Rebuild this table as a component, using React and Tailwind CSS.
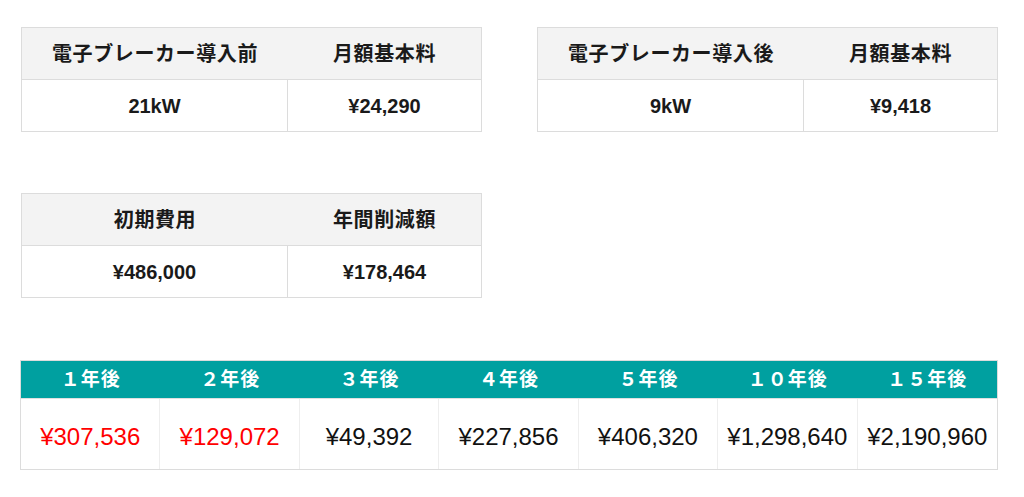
import React from "react";

const font = { fontFamily: '"Liberation Sans", "Noto Sans CJK JP", sans-serif' };

function InfoTable({ h1, h2, v1, v2 }) {
  return (
    <div className="w-[461px] border border-[#dcdcdc] text-[20px] font-bold text-[#1a1a1a]">
      <div className="grid grid-cols-[266px_1fr] h-[52px] bg-[#f3f3f3] border-b border-[#dcdcdc] tracking-[0.6px]">
        <div className="flex items-center justify-center">{h1}</div>
        <div className="flex items-center justify-center">{h2}</div>
      </div>
      <div className="grid grid-cols-[266px_1fr] h-[51px] bg-white">
        <div className="flex items-center justify-center border-r border-[#dcdcdc]">{v1}</div>
        <div className="flex items-center justify-center">{v2}</div>
      </div>
    </div>
  );
}

const years = [
  { y: "１年後", v: "¥307,536", red: true },
  { y: "２年後", v: "¥129,072", red: true },
  { y: "３年後", v: "¥49,392" },
  { y: "４年後", v: "¥227,856" },
  { y: "５年後", v: "¥406,320" },
  { y: "１０年後", v: "¥1,298,640" },
  { y: "１５年後", v: "¥2,190,960" },
];

export default function App() {
  return (
    <div className="w-[1024px] h-[497px] bg-white pt-[27px]" style={font}>
      <div className="flex pl-[21px] gap-[55px]">
        <InfoTable h1="電子ブレーカー導入前" h2="月額基本料" v1="21kW" v2="¥24,290" />
        <InfoTable h1="電子ブレーカー導入後" h2="月額基本料" v1="9kW" v2="¥9,418" />
      </div>
      <div className="pl-[21px] mt-[61px]">
        <InfoTable h1="初期費用" h2="年間削減額" v1="¥486,000" v2="¥178,464" />
      </div>
      <div className="ml-[20px] mt-[62px] w-[978px] border border-[#dcdcdc]">
        <div className="grid grid-cols-7 h-[38px] bg-[#00a0a0] border-b border-[#e0e0e0] text-white text-[19px] font-bold">
          {years.map((c) => (
            <div key={c.y} className="flex items-center justify-center tracking-[1px] pt-[1px]">
              {c.y}
            </div>
          ))}
        </div>
        <div className="grid grid-cols-7 h-[70px] bg-white text-[24px]">
          {years.map((c, i) => (
            <div
              key={c.y}
              className={
                "flex items-center justify-center pt-[6px] " +
                (i < 6 ? "border-r border-[#eeeeee] " : "") +
                (c.red ? "text-[#ff0000]" : "text-[#111111]")
              }
            >
              {c.v}
            </div>
          ))}
        </div>
      </div>
    </div>
  );
}
